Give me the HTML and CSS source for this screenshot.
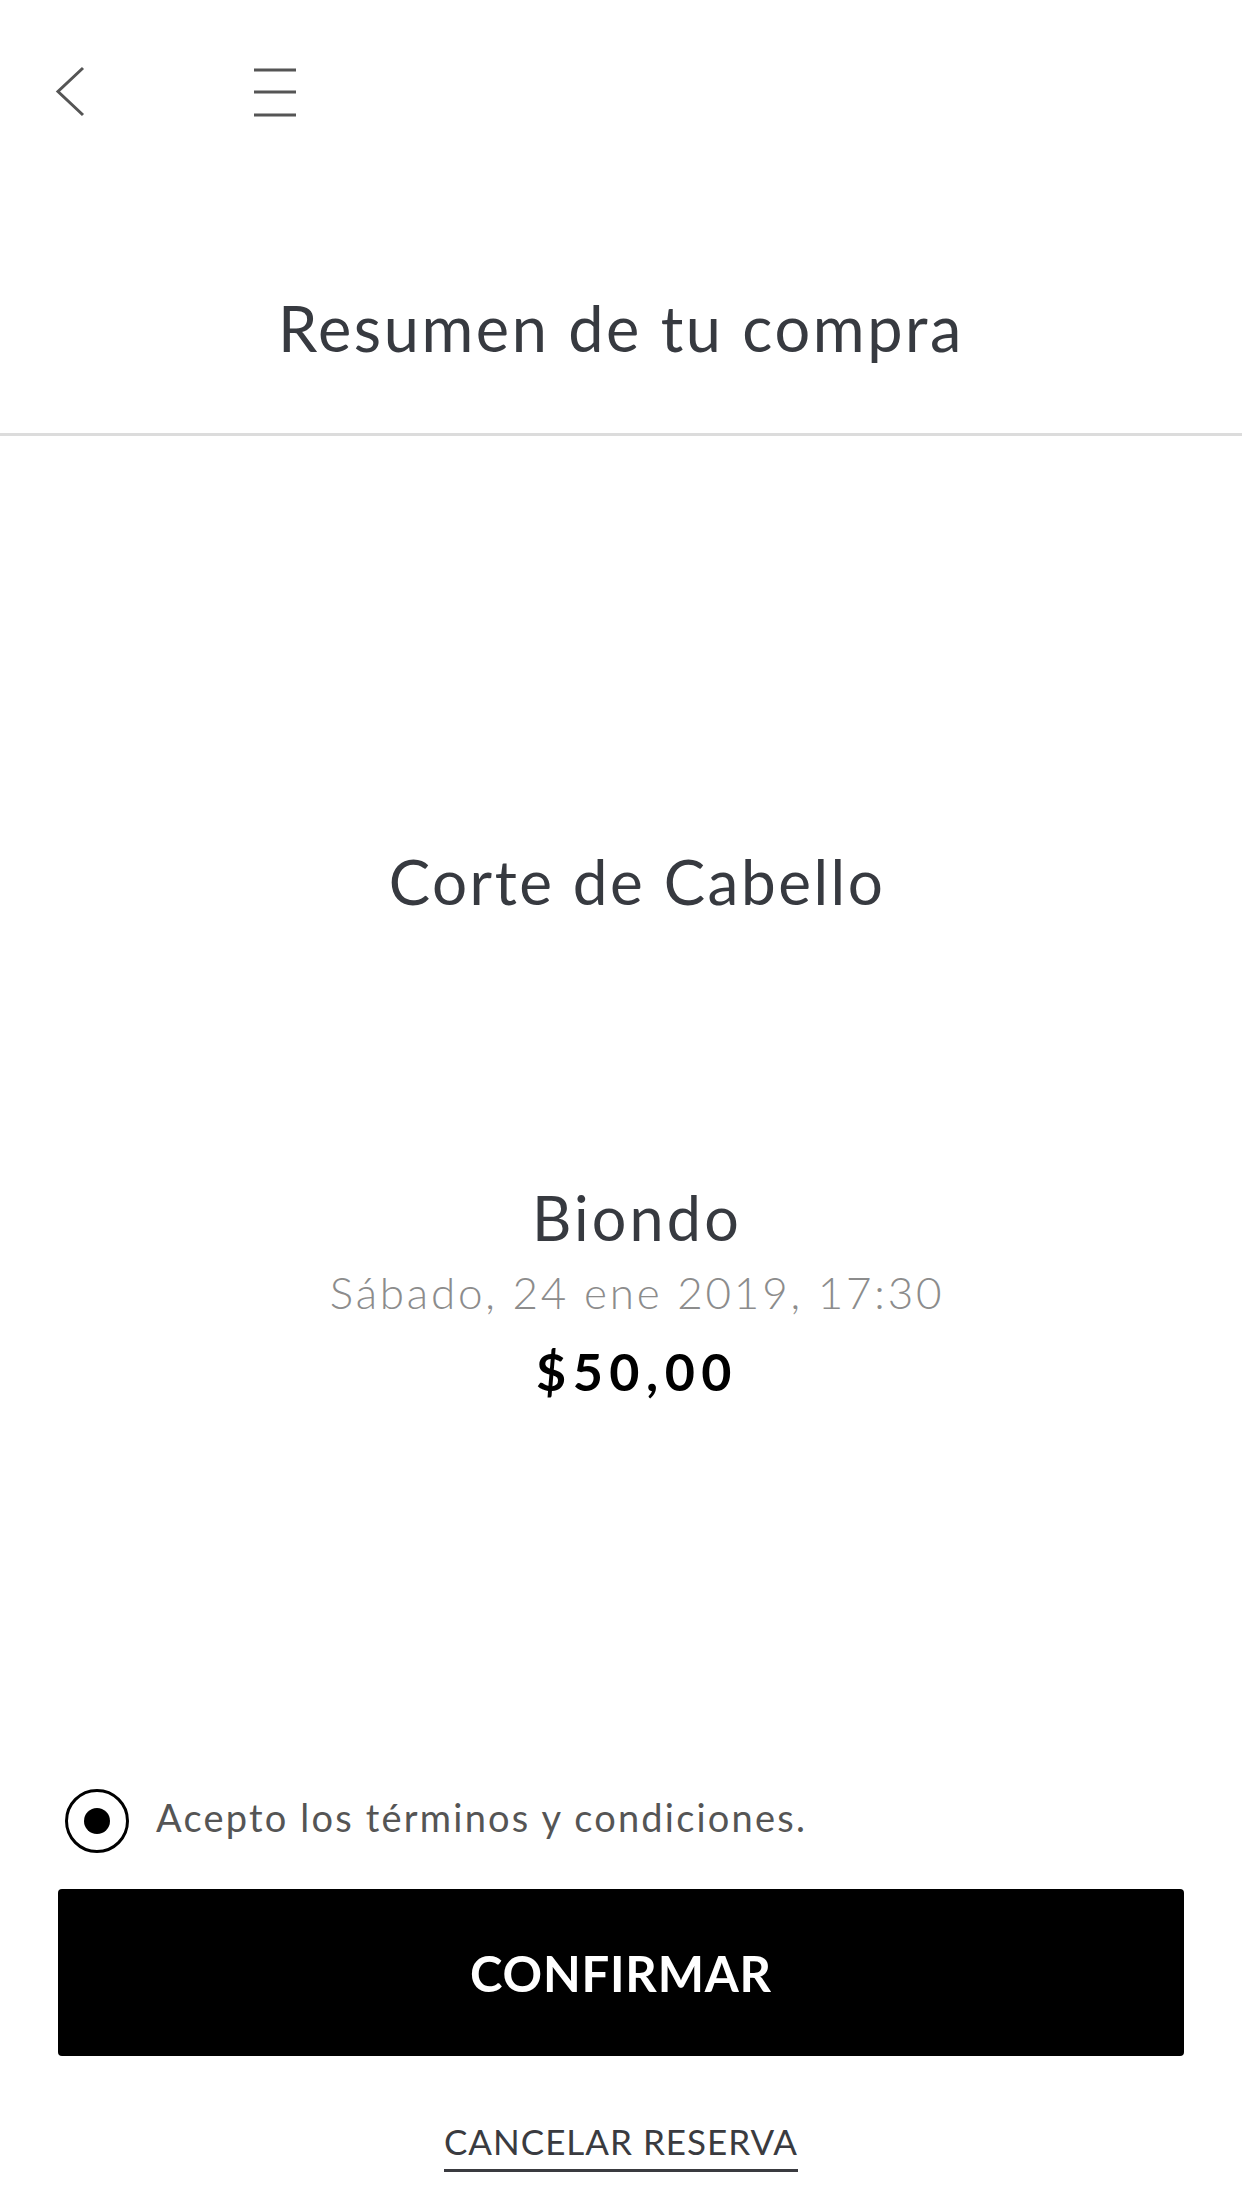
FILE: index.html
```html
<!DOCTYPE html>
<html lang="es">
<head>
    <meta charset="UTF-8">
    <meta name="viewport" content="width=device-width, initial-scale=1.0">
    <title>Resumen de tu compra</title>
    <link rel="stylesheet" href="styles.css">
</head>
<body>

    <!-- Barra superior con volver y menú -->
    <header class="topbar">
        <svg class="icono-volver" width="30" height="52" viewBox="0 0 30 52">
            <polyline points="28,2 3,25.5 28,49" fill="none" stroke="#555" stroke-width="3"/>
        </svg>
        <svg class="icono-menu" width="44" height="50" viewBox="0 0 44 50">
            <line x1="1" y1="3" x2="43" y2="3" stroke="#555" stroke-width="3"/>
            <line x1="1" y1="25" x2="43" y2="25" stroke="#555" stroke-width="3"/>
            <line x1="1" y1="48" x2="43" y2="48" stroke="#555" stroke-width="3"/>
        </svg>
    </header>

    <h1 class="titulo">Resumen de tu compra</h1>

    <!-- Detalle del servicio -->
    <main class="resumen">
        <h2 class="servicio">Corte de Cabello</h2>
        <div class="profesional">Biondo</div>
        <div class="fecha">Sábado, 24 ene 2019, 17:30</div>
        <div class="precio">$50,00</div>
    </main>

    <!-- Términos y acciones -->
    <footer class="acciones">
        <label class="terminos">
            <span class="radio"><span class="radio-punto"></span></span>
            <span class="terminos-texto">Acepto los términos y condiciones.</span>
        </label>
        <button class="btn-confirmar">CONFIRMAR</button>
        <div class="cancelar">
            <a href="#" class="link-cancelar">CANCELAR RESERVA</a>
        </div>
    </footer>

</body>
</html>
```

FILE: styles.css
```css
/* Estilos generales */
body {
    font-family: "Lato", "Noto Sans", sans-serif;
    background-color: #fff;
    color: #373a40;
    margin: 0;
    width: 1242px;
    height: 2208px;
    overflow: hidden;
}
/* Barra superior */
.topbar {
    height: 184px;
    display: flex;
    align-items: center;
    padding-left: 55px;
    gap: 168px;
}
.topbar svg {
    display: block;
}
/* Título con línea inferior */
.titulo {
    margin: 0;
    padding: 112px 0 74px;
    font-size: 63px;
    font-weight: 400;
    line-height: 1;
    letter-spacing: 2.6px;
    text-align: center;
    border-bottom: 3px solid #dcdcdc;
}
/* Bloque de resumen (ligeramente desplazado a la derecha) */
.resumen {
    text-align: center;
    padding-left: 32px;
}
.servicio {
    margin: 414px 0 0;
    font-size: 62px;
    font-weight: 400;
    line-height: 1;
    letter-spacing: 2.5px;
}
.profesional {
    margin-top: 275px;
    font-size: 61px;
    line-height: 1;
    letter-spacing: 3.2px;
}
.fecha {
    margin-top: 22px;
    font-size: 44px;
    font-weight: 300;
    line-height: 1;
    color: #8c8c8c;
    letter-spacing: 2.8px;
}
.precio {
    margin-top: 31px;
    font-size: 52px;
    font-weight: 700;
    line-height: 1;
    color: #000;
    letter-spacing: 6.5px;
}
/* Zona inferior */
.acciones {
    padding: 0 58px;
    margin-top: 392px;
}
.terminos {
    display: flex;
    align-items: center;
    gap: 27px;
    margin-left: 7px;
}
.radio {
    width: 58px;
    height: 58px;
    border: 3px solid #000;
    border-radius: 50%;
    display: flex;
    align-items: center;
    justify-content: center;
}
.radio-punto {
    width: 26px;
    height: 26px;
    border-radius: 50%;
    background-color: #000;
}
.terminos-texto {
    font-size: 38px;
    line-height: 1;
    color: #555;
    padding-bottom: 8px;
    letter-spacing: 2.2px;
}
/* Botón principal */
.btn-confirmar {
    display: block;
    width: 100%;
    height: 167px;
    margin-top: 36px;
    border: none;
    border-radius: 4px;
    background-color: #000;
    color: #fff;
    font-family: inherit;
    font-size: 49px;
    font-weight: 700;
    letter-spacing: 0.8px;
}
/* Enlace de cancelar */
.cancelar {
    margin-top: 68px;
    text-align: center;
}
.link-cancelar {
    display: inline-block;
    font-size: 35px;
    line-height: 1;
    color: #3a3b40;
    text-decoration: none;
    padding-bottom: 10px;
    border-bottom: 3px solid #3a3b40;
    letter-spacing: 1px;
}
```
